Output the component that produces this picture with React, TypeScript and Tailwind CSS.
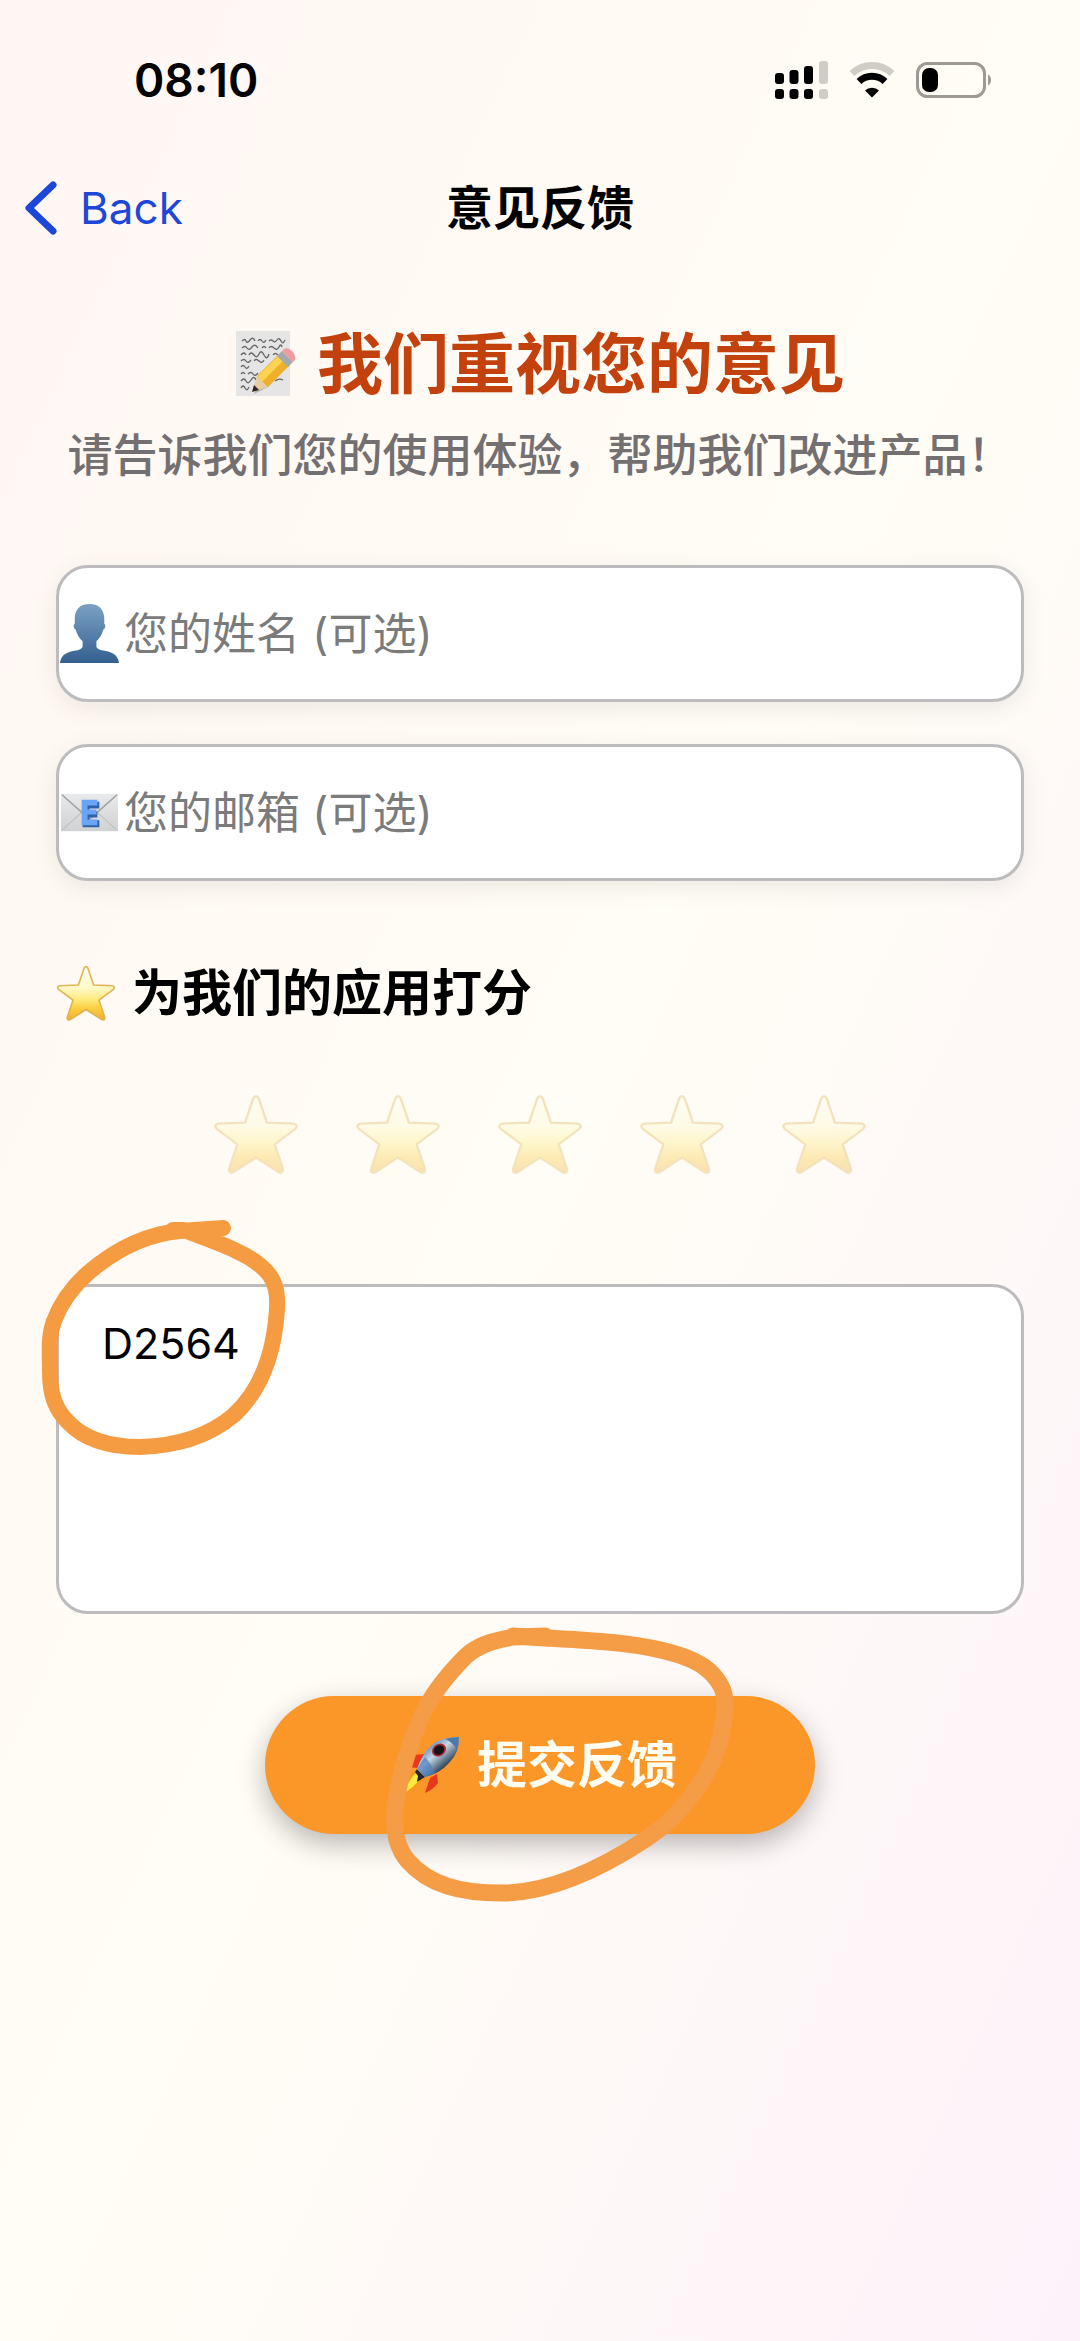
import { useState, type FormEvent } from "react";

const SCORES = [1, 2, 3, 4, 5];

export default function App() {
  const [name, setName] = useState("");
  const [email, setEmail] = useState("");
  const [rating, setRating] = useState(0);
  const [message, setMessage] = useState("D2564");

  function handleSubmit(e: FormEvent) {
    e.preventDefault();
  }

  return (
    <div className="min-h-screen bg-linear-to-br from-[#fff6f3] via-[#fffdf5] to-[#fdf2fa] font-['Inter','Noto_Sans_CJK_SC',sans-serif] text-black">
      <StatusBar />

      <header className="grid h-24 grid-cols-3 items-center px-6">
        <a href="#back" className="flex items-center gap-[22px] text-[44px] text-[#1d47d8]">
          <svg viewBox="0 0 34 54" className="h-[54px] w-[34px]" fill="none">
            <path
              d="M29 4 5 27l24 23"
              stroke="currentColor"
              strokeWidth="7"
              strokeLinecap="round"
              strokeLinejoin="round"
            />
          </svg>
          Back
        </a>
        <h1 className="text-center text-[47px] font-semibold">意见反馈</h1>
      </header>

      <main className="px-14 pt-[66px]">
        <h2 className="flex h-[84px] items-center justify-center gap-5 text-[66px] font-semibold text-[#c2410c]">
          <MemoIcon />
          我们重视您的意见
        </h2>
        <p className="mt-[18px] text-center text-[45px] leading-[64px] font-medium text-[#746f70]">
          请告诉我们您的使用体验，帮助我们改进产品！
        </p>

        <form onSubmit={handleSubmit} className="mt-[77px]">
          <div className="space-y-[42px]">
            <label className="flex h-[137px] items-center gap-[5px] rounded-[32px] border-[3px] border-[#bcbcbe] bg-white px-px shadow-[0_6px_24px_rgba(0,0,0,0.08)]">
              <PersonIcon />
              <input
                type="text"
                aria-label="您的姓名"
                placeholder="您的姓名 (可选)"
                value={name}
                onChange={(e) => setName(e.target.value)}
                className="min-w-0 flex-1 text-[44px] outline-none placeholder:text-[#7b7b7b]"
              />
            </label>
            <label className="flex h-[137px] items-center gap-[5px] rounded-[32px] border-[3px] border-[#bcbcbe] bg-white px-px shadow-[0_6px_24px_rgba(0,0,0,0.08)]">
              <EmailIcon />
              <input
                type="email"
                aria-label="您的邮箱"
                placeholder="您的邮箱 (可选)"
                value={email}
                onChange={(e) => setEmail(e.target.value)}
                className="min-w-0 flex-1 text-[44px] outline-none placeholder:text-[#7b7b7b]"
              />
            </label>
          </div>

          <h3 className="mt-[76px] flex h-[72px] items-center gap-4 text-[50px] font-semibold">
            <StarIcon className="size-[60px]" />
            为我们的应用打分
          </h3>

          <div className="mt-[62px] flex justify-center gap-14">
            {SCORES.map((score) => (
              <button
                key={score}
                type="button"
                aria-label={`${score} 星`}
                onClick={() => setRating(score)}
                className={score <= rating ? "" : "opacity-35"}
              >
                <StarIcon className="size-[86px]" />
              </button>
            ))}
          </div>

          <div className="relative mt-[107px]">
            <textarea
              aria-label="意见"
              value={message}
              onChange={(e) => setMessage(e.target.value)}
              className="block h-[330px] w-full resize-none rounded-[32px] border-[3px] border-[#bcbcbe] bg-white px-[43px] py-[29px] text-[43px] leading-[54px] outline-none"
            />
            <svg
              viewBox="36 1212 260 250"
              className="pointer-events-none absolute -top-[73px] -left-5 h-[250px] w-[260px]"
              fill="none"
            >
              <path
                d="M223 1229 180 1232C146 1235 116 1250 88 1274C70 1290 60 1306 54 1322C48 1338 50 1354 50 1373C50 1397 56 1411 68 1423C84 1440 108 1448 140 1448C176 1447 208 1438 234 1416C260 1392 274 1358 277 1310C278 1292 275 1279 262 1268C246 1253 215 1243 184 1231L173 1231"
                stroke="#f59c43"
                strokeWidth="16"
                strokeLinecap="round"
                strokeLinejoin="round"
              />
            </svg>
          </div>

          <div className="relative mx-auto mt-[82px] w-fit">
            <button
              type="submit"
              className="flex h-[138px] items-center justify-center gap-4 rounded-full bg-[#fb9729] px-[138px] text-[50px] font-semibold text-[#fffdf2] shadow-[0_10px_28px_rgba(0,0,0,0.28)]"
            >
              <RocketIcon />
              提交反馈
            </button>
            <svg
              viewBox="376 1616 366 296"
              className="pointer-events-none absolute -top-20 left-[110px] h-[296px] w-[366px]"
              fill="none"
            >
              <path
                d="M546 1636 514 1637C492 1641 478 1646 467 1656C448 1675 431 1696 421 1720C409 1748 400 1775 396 1810C394 1832 398 1848 409 1861C429 1884 460 1894 508 1893C553 1891 600 1870 647 1839C690 1810 715 1768 722 1735C727 1710 728 1697 722 1686C713 1669 698 1661 680 1655C643 1643 600 1641 546 1638L514 1636"
                stroke="#f59c46"
                strokeWidth="17"
                strokeLinecap="round"
                strokeLinejoin="round"
              />
            </svg>
          </div>
        </form>
      </main>
    </div>
  );
}

function StatusBar() {
  return (
    <div className="flex h-40 items-center justify-between pr-[88px] pl-[134px]">
      <time className="text-[46px] font-semibold">08:10</time>
      <div className="flex items-center gap-[21px]">
        <svg viewBox="0 0 53 38" className="h-[38px] w-[53px]">
          <rect x="0" y="12" width="9" height="11" rx="3" />
          <rect x="14.500" y="9" width="9" height="14" rx="3" />
          <rect x="29" y="5" width="9" height="18" rx="3" />
          <rect x="44" y="0" width="9" height="23" rx="3" fill="#d0cdc7" />
          <rect x="0" y="28" width="9" height="10" rx="3" />
          <rect x="14.500" y="28" width="9" height="10" rx="3" />
          <rect x="29" y="28" width="9" height="10" rx="3" />
          <rect x="44" y="28" width="9" height="10" rx="3" fill="#d0cdc7" />
        </svg>
        <svg viewBox="0 0 46 36" className="h-9 w-[46px]" fill="none">
          <path d="M3 11.500a29 29 0 0 1 40 0" stroke="#d0cdc7" strokeWidth="7" />
          <path d="M10 19.500a19 19 0 0 1 26 0" stroke="#000" strokeWidth="7" />
          <path d="M23 35.500 16 28.500a10 10 0 0 1 14 0z" fill="#000" />
        </svg>
        <svg viewBox="0 0 76 38" className="h-[38px] w-[76px]" fill="none">
          <rect x="1.500" y="2.500" width="67" height="33" rx="10" stroke="#9d9a95" strokeWidth="3" />
          <rect x="6" y="7" width="16" height="24" rx="7" fill="#000" />
          <path d="M72 13.500c4 2 4 9 0 11z" fill="#9d9a95" />
        </svg>
      </div>
    </div>
  );
}

function StarIcon({ className }: { className: string }) {
  return (
    <svg viewBox="0 0 60 60" className={className}>
      <defs>
        <linearGradient id="star-fill" x1="0" y1="0" x2="0" y2="1">
          <stop offset="0" stopColor="#fffdf0" />
          <stop offset="0.4" stopColor="#fff9c8" />
          <stop offset="0.62" stopColor="#fdea7a" />
          <stop offset="0.8" stopColor="#fbcb3c" />
          <stop offset="1" stopColor="#f2ac34" />
        </linearGradient>
      </defs>
      <path
        d="M28 5.400Q30 1.800 32 5.400L37.600 22 56 22.800Q60 23.600 57.400 26.400L43 37.200 48.800 54.400Q49 58 45.600 56.600L30 46.500 14.400 56.600Q11 58 11.200 54.400L17 37.200 2.600 26.400Q0 23.600 4 22.800L22.400 22Z"
        fill="url(#star-fill)"
        stroke="#dfb552"
        strokeWidth="1.600"
        strokeLinejoin="round"
      />
    </svg>
  );
}

function MemoIcon() {
  return (
    <svg viewBox="0 0 62 66" className="h-[66px] w-[62px]" fill="none">
      <rect x="1" y="0" width="54" height="65" fill="#e4e5e4" />
      <path
        d="M7 10q3-3 4 0t4-1 5 1 M23 10q2-3 4 0t4-1 M34 10q2-2 4 0t4-1 4 1 4-1M7 17q3-3 5 0t5-1 6 1M27 17q2-3 4 0M34 17q2-3 5 0t5-1 3 0M6 24q3-4 5 0M14 24q2-4 5 0t5-1 5 1 5-1M38 24q2-3 5 0M6 30q3-3 5 0t5-1M19 30q2-3 5 0t5-1M6 36q2-3 4 0t4-1M6 43q2-3 4 0M13 43q3-3 5 0t5-1M6 50q3-4 5 0t5-1 5 0M6 57q2-4 4 0t4-1M40 50q4-3 8-1"
        stroke="#666"
        strokeWidth="1.300"
      />
      <path d="m19 63 6-12 25-22 9-2-26 29z" fill="#000" opacity=".22" />
      <path d="m17 61 5-16 11 11z" fill="#e8cda0" />
      <path d="m17 61 2-7 5 5z" fill="#2f2a26" />
      <path d="m22 45 22-22 11 11-22 22z" fill="#eeb02a" />
      <path d="m23 45 22-22 5 5-23 23z" fill="#fbd350" />
      <path d="m42 25 5-5 11 11-5 5z" fill="#a5a9ad" />
      <path d="m47 20 2-2q4-2 8 2t3 9l-2 2z" fill="#f09b9f" />
    </svg>
  );
}

function PersonIcon() {
  return (
    <svg viewBox="0 0 60 60" className="size-[59px] shrink-0">
      <defs>
        <linearGradient id="person-fill" x1="0" y1="0" x2="0" y2="1">
          <stop offset="0" stopColor="#7ba1c5" />
          <stop offset="1" stopColor="#34608f" />
        </linearGradient>
      </defs>
      <path
        d="M30 0C20 0 15 6 15 15v5c-2 1-1 5 1 6 1 5 4 9 7 12v5c0 2-2 3-5 4C8 48 1 51 0 60h60c-1-9-8-12-18-13-3-1-5-2-5-4v-5c3-3 6-7 7-12 2-1 3-5 1-6v-5C45 6 40 0 30 0Z"
        fill="url(#person-fill)"
      />
    </svg>
  );
}

function EmailIcon() {
  return (
    <svg viewBox="0 0 60 60" className="size-[59px] shrink-0" fill="none">
      <defs>
        <linearGradient id="mail-fill" x1="0" y1="0" x2="0" y2="1">
          <stop offset="0" stopColor="#e9eaeb" />
          <stop offset="1" stopColor="#cfd1d3" />
        </linearGradient>
      </defs>
      <rect x="1" y="11" width="58" height="38" fill="url(#mail-fill)" />
      <path d="m2 48 20-18M58 48 38 30" stroke="#b5b7b9" strokeWidth="1" />
      <path d="M2 12l28 25 28-25" stroke="#9c9ea0" strokeWidth="1.500" />
      <path d="M23 19h17v7H30v3h8v6h-8v3h10v7H23z" fill="#2f62a8" />
      <path d="M22 17h16v6H28v4h9v5h-9v5h10v6H22z" fill="#6ba4f4" />
    </svg>
  );
}

function RocketIcon() {
  return (
    <svg viewBox="0 0 58 58" className="size-[58px]">
      <defs>
        <linearGradient id="rocket-body" x1="0.3" y1="0.2" x2="0.75" y2="0.7">
          <stop offset="0" stopColor="#5f93c9" />
          <stop offset="0.4" stopColor="#c9d6e2" />
          <stop offset="0.65" stopColor="#8397ab" />
          <stop offset="1" stopColor="#26384c" />
        </linearGradient>
      </defs>
      <path d="M22 18 11 19Q6 22 3 31l13 1z" fill="#e8391d" />
      <path d="M34 38 27 42l-5 15q9-4 13-10z" fill="#e8391d" />
      <path d="M12 35Q3 40 1 57q11-3 21-16z" fill="#f59a1b" />
      <path d="M13 37Q5 44 2 56q9-4 17-16z" fill="#fdea3f" />
      <path d="m14 33 8 8-8 5 1-6-3-4z" fill="#2a2430" />
      <path d="M56 1Q39 1 29 9 19 18 14 33l8 8q14-3 24-14Q57 16 56 1Z" fill="url(#rocket-body)" />
      <path d="M22 21 14 33l8 8 10-4q-4-10-10-16Z" fill="#4d7fbd" opacity=".7" />
      <path d="M56 1Q48 1 42 3q8 3 12 11 2-6 2-13Z" fill="#4f79ab" />
      <ellipse cx="36" cy="14" rx="7.500" ry="6" transform="rotate(-35 36 14)" fill="#a82a34" />
      <ellipse cx="36" cy="14" rx="5.500" ry="4.500" transform="rotate(-35 36 14)" fill="#171416" />
    </svg>
  );
}
